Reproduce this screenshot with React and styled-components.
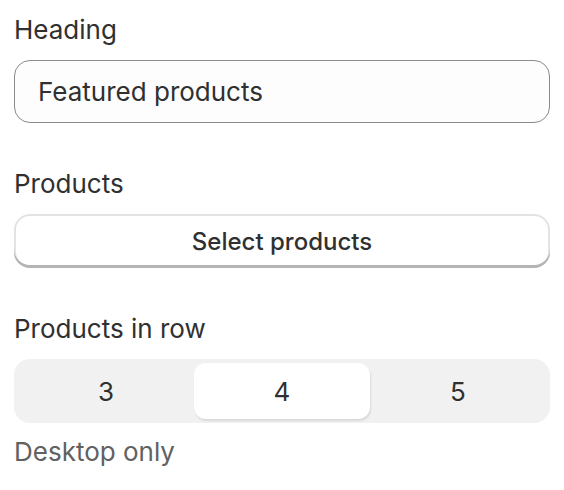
import * as React from 'react';
import styled, { createGlobalStyle } from 'styled-components';

const GlobalStyle = createGlobalStyle`
    html, body {
        margin: 0;
        padding: 0;
        background: #ffffff;
    }
    body {
        font-family: Inter, "Noto Sans", sans-serif;
        color: #303030;
        -webkit-font-smoothing: antialiased;
    }
`;

const Panel = styled.div`
    display: flex;
    flex-direction: column;
    gap: 45px;
    padding: 14px 14px 0 14px;
`;

const Field = styled.div`
    display: flex;
    flex-direction: column;
    gap: 14px;
`;

const Label = styled.div`
    font-size: 26px;
    line-height: 32px;
    font-weight: 400;
    color: #303030;
`;

const TextInput = styled.input`
    box-sizing: border-box;
    width: 100%;
    height: 63px;
    padding: 0 23px;
    border: 1.5px solid #8a8a8a;
    border-radius: 16px;
    background: #fdfdfd;
    font-family: inherit;
    font-size: 26px;
    font-weight: 400;
    color: #303030;
    outline: none;
`;

const Button = styled.button`
    box-sizing: border-box;
    width: 100%;
    height: 54px;
    border: none;
    border-radius: 16px;
    background: #ffffff;
    box-shadow:
        inset 0 -3px 0 0 #b5b5b5,
        inset 0 0 0 2px #e3e3e3;
    font-family: inherit;
    font-size: 24px;
    font-weight: 500;
    color: #303030;
    padding: 0;
    cursor: pointer;
`;

const SegmentGroup = styled.div`
    display: grid;
    grid-template-columns: repeat(3, 1fr);
    box-sizing: border-box;
    height: 64px;
    padding: 4px;
    border-radius: 16px;
    background: #f1f1f1;
`;

const Segment = styled.button`
    border: none;
    border-radius: 12px;
    background: ${p => (p.$selected ? '#ffffff' : 'transparent')};
    box-shadow: ${p => (p.$selected ? '1px 2px 2px rgba(0, 0, 0, 0.1)' : 'none')};
    font-family: inherit;
    font-size: 26px;
    font-weight: 400;
    color: #303030;
    cursor: pointer;
`;

const HelpText = styled.div`
    font-size: 26px;
    line-height: 32px;
    font-weight: 400;
    color: #616161;
`;

const ControlStack = styled.div`
    display: flex;
    flex-direction: column;
    gap: 13px;
`;

export default function App() {
    const [heading, setHeading] = React.useState('Featured products');
    const [perRow, setPerRow] = React.useState(4);

    return (
        <>
            <GlobalStyle />
            <Panel>
                <Field>
                    <Label>Heading</Label>
                    <TextInput value={heading} onChange={e => setHeading(e.target.value)} />
                </Field>
                <Field>
                    <Label>Products</Label>
                    <Button>Select products</Button>
                </Field>
                <Field>
                    <Label>Products in row</Label>
                    <ControlStack>
                        <SegmentGroup>
                            {[3, 4, 5].map(n => (
                                <Segment key={n} $selected={n === perRow} onClick={() => setPerRow(n)}>
                                    {n}
                                </Segment>
                            ))}
                        </SegmentGroup>
                        <HelpText>Desktop only</HelpText>
                    </ControlStack>
                </Field>
            </Panel>
        </>
    );
}
